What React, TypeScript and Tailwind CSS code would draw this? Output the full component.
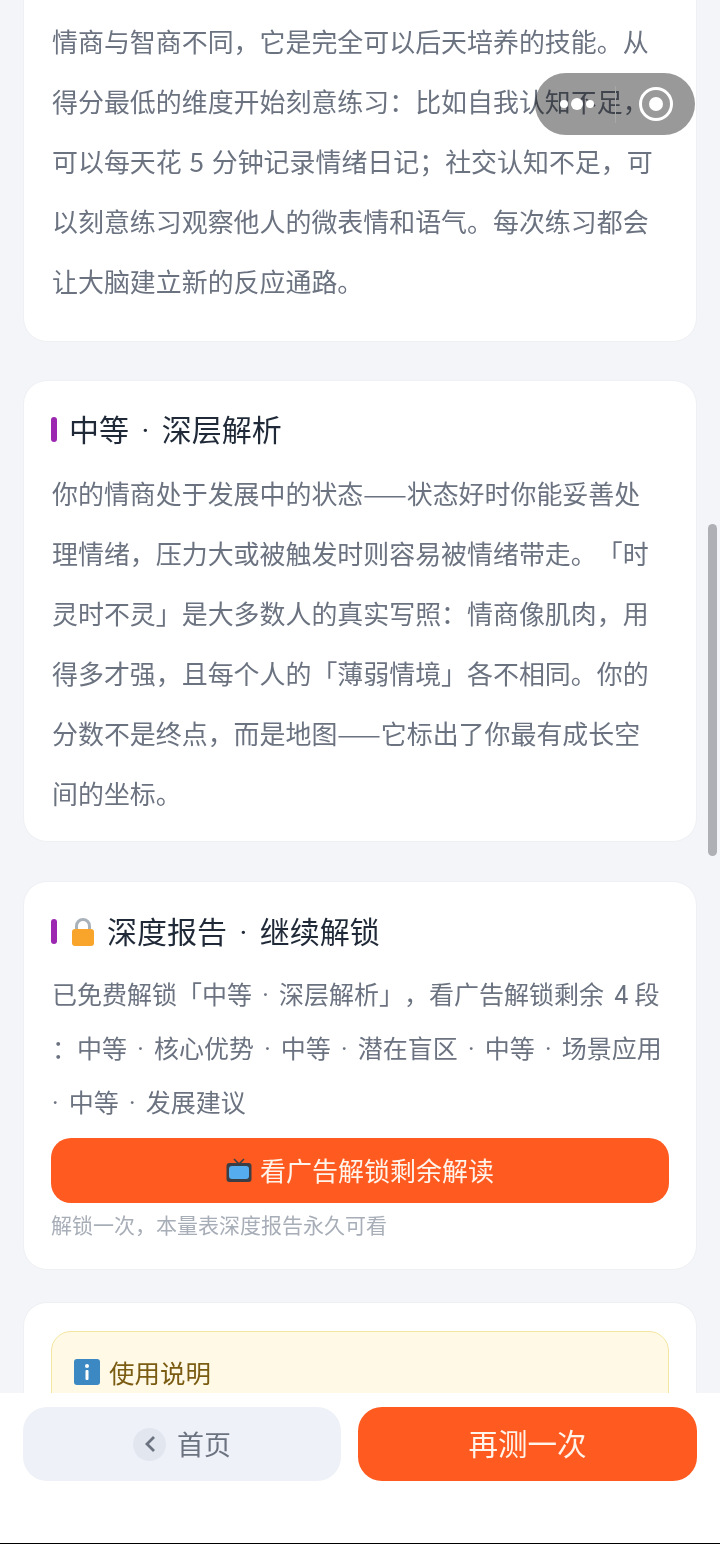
const fontStack = { fontFamily: '"Noto Sans CJK SC", "Noto Sans", sans-serif' };

function Heading({ children }: { children: React.ReactNode }) {
  return (
    <div className="flex items-center gap-[12px] font-['Roboto','Noto_Sans_CJK_SC',sans-serif] text-[30px] leading-[40px] text-[#1f2937] [word-spacing:5px]">
      <span className="h-[25px] w-[6px] rounded-full bg-[#9c27b0]" />
      <span className="translate-y-[2px]">{children}</span>
    </div>
  );
}

function LockIcon() {
  return (
    <svg width="24" height="30" viewBox="0 0 24 30" className="ml-[2px] -translate-y-[1px]">
      <path d="M5.5 14V9a6.5 6.5 0 0 1 13 0v5" fill="none" stroke="#a9b2ba" strokeWidth="3" />
      <rect x="1" y="12" width="22" height="17" rx="3" fill="#f9a52c" />
    </svg>
  );
}

function TvIcon() {
  return (
    <svg width="26" height="26" viewBox="0 0 26 26">
      <path d="M8 2l5 5 5-5" fill="none" stroke="#3b3f45" strokeWidth="1.6" />
      <rect x="0.5" y="6" width="25" height="19" rx="3" fill="#3b3f45" />
      <rect x="3" y="9" width="20" height="13" rx="3" fill="#55acee" />
    </svg>
  );
}

function InfoIcon() {
  return (
    <svg width="26" height="26" viewBox="0 0 26 26">
      <rect width="26" height="26" rx="3" fill="#3b88c3" />
      <circle cx="13" cy="7" r="2" fill="#fff" />
      <rect x="11.5" y="11" width="3" height="10" rx="1" fill="#fff" />
    </svg>
  );
}

export default function App() {
  return (
    <div style={fontStack} className="relative h-[1544px] w-[720px] overflow-hidden bg-[#f3f5f9] [text-spacing-trim:space-all]">
      <div className="flex flex-col px-[23px]">
        <div className="-mt-[21px] mb-[38px] rounded-b-[24px] border border-[#eef0f4] bg-white pb-[30px] pl-[28px] pr-[34px] pt-[31px]">
          <p className="text-[25.95px] leading-[60px] text-[#6b7280] [word-spacing:2px]">
            情商与智商不同，它是完全可以后天培养的技能。从得分最低的维度开始刻意练习：比如自我认知不足，可以每天花 5 分钟记录情绪日记；社交认知不足，可以刻意练习观察他人的微表情和语气。每次练习都会让大脑建立新的反应通路。
          </p>
        </div>

        <div className="mb-[39px] rounded-[24px] border border-[#eef0f4] bg-white pb-[18px] pl-[27px] pr-[34px] pt-[28px]">
          <Heading>中等 · 深层解析</Heading>
          <p className="mt-[14px] pl-[1px] text-[25.95px] leading-[60px] text-[#6b7280]">
            你的情商处于发展中的状态——状态好时你能妥善处理情绪，压力大或被触发时则容易被情绪带走。「时灵时不灵」是大多数人的真实写照：情商像肌肉，用得多才强，且每个人的「薄弱情境」各不相同。你的分数不是终点，而是地图——它标出了你最有成长空间的坐标。
          </p>
        </div>

        <div className="mb-[32px] rounded-[24px] border border-[#eef0f4] bg-white pb-[31px] pl-[27px] pr-[27px] pt-[29px]">
          <Heading>
            <span className="flex items-center gap-[12px]">
              <LockIcon />
              深度报告 · 继续解锁
            </span>
          </Heading>
          <p className="mt-[18px] pl-[1px] font-['Roboto','Noto_Sans_CJK_SC',sans-serif] text-[25px] leading-[54px] text-[#6b7280] [word-spacing:4px]">
            已免费解锁「中等 · 深层解析」，看广告解锁剩余 <span className="[word-spacing:0px]">4 段</span> ：中等 · 核心优势 · 中等 · 潜在盲区 · 中等 · 场景应用 · 中等 · 发展建议
          </p>
          <div className="mt-[7px] flex h-[65px] items-center justify-center gap-[8px] rounded-[20px] bg-[#ff5a1f] pb-[2px] text-[26px] text-[#fff3ea]">
            <TvIcon />
            看广告解锁剩余解读
          </div>
          <p className="mt-[7px] text-[21px] leading-[28px] text-[#a8aeb8]">解锁一次，本量表深度报告永久可看</p>
        </div>

        <div className="rounded-[24px] border border-[#eef0f4] bg-white px-[27px] pb-[40px] pt-[28px]">
          <div className="h-[200px] rounded-[20px] border border-[#f3e6a0] bg-[#fff9e6] px-[22px] pt-[20px]">
            <div className="flex items-center gap-[9px] text-[25.5px] leading-[40px] text-[#7a5c12]">
              <InfoIcon />
              使用说明
            </div>
          </div>
        </div>
      </div>

      {/* scrollbar */}
      <div className="absolute left-[708px] top-[524px] h-[332px] w-[9px] rounded-full bg-[#aeb0b5]" />

      {/* mini program capsule */}
      <div className="absolute left-[535px] top-[73px] h-[62px] w-[160px] rounded-full bg-[#999999] mix-blend-multiply" />
      <div className="absolute left-[535px] top-[73px] flex h-[62px] w-[160px] items-center">
        <div className="flex w-[80px] items-center justify-center gap-[3px] pl-[3px]">
          <span className="h-[8px] w-[8px] rounded-full bg-white" />
          <span className="h-[12px] w-[12px] rounded-full bg-white" />
          <span className="h-[8px] w-[8px] rounded-full bg-white" />
        </div>
        <span className="h-[37px] w-px bg-[#a8a8a8]" />
        <div className="flex flex-1 items-center justify-center pl-[1px]">
          <span className="flex h-[34px] w-[34px] items-center justify-center rounded-full border-[3px] border-white">
            <span className="h-[14px] w-[14px] rounded-full bg-white" />
          </span>
        </div>
      </div>

      {/* bottom bar */}
      <div className="absolute inset-x-0 bottom-0 h-[151px] border-b border-black bg-white px-[23px] pt-[14px]">
        <div className="flex gap-[17px]">
          <div className="flex h-[74px] w-[318px] items-center justify-center gap-[11px] rounded-[24px] bg-[#eff1f8] text-[27px] text-[#6b7280]">
            <span className="flex h-[33px] w-[33px] items-center justify-center rounded-full bg-[#e2e6ef]">
              <svg width="14" height="20" viewBox="0 0 14 20">
                <path d="M11 3L4 10l7 7" fill="none" stroke="#6b7280" strokeWidth="2.8" />
              </svg>
            </span>
            首页
          </div>
          <div className="flex h-[74px] flex-1 items-center justify-center rounded-[24px] bg-[#ff5a1f] pb-[3px] text-[29.5px] text-[#fff3ea]">
            再测一次
          </div>
        </div>
      </div>
    </div>
  );
}
